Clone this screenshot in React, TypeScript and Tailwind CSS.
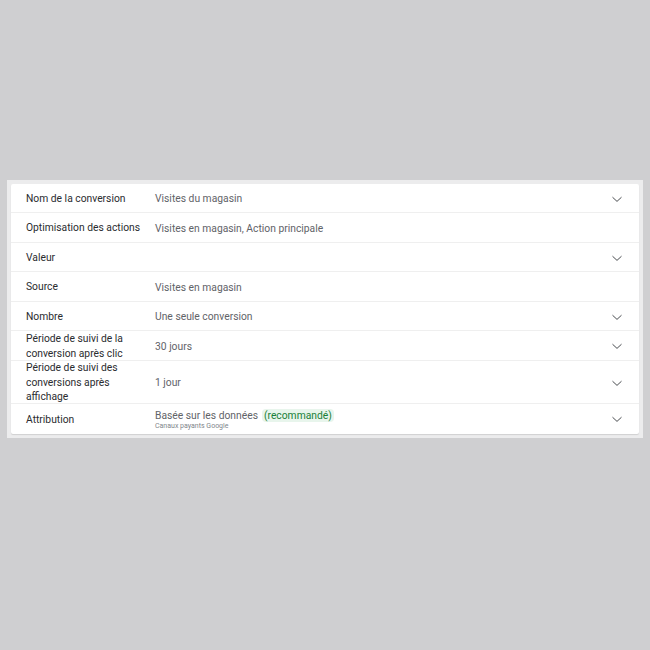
const rows = [
  { label: ["Nom de la conversion"], value: "Visites du magasin", chevron: true, h: "h-[29px]" },
  { label: ["Optimisation des actions"], value: "Visites en magasin, Action principale", chevron: false, h: "h-[30px]" },
  { label: ["Valeur"], value: "", chevron: true, h: "h-[29px]" },
  { label: ["Source"], value: "Visites en magasin", chevron: false, h: "h-[30px]" },
  { label: ["Nombre"], value: "Une seule conversion", chevron: true, h: "h-[29px]" },
  { label: ["Période de suivi de la", "conversion après clic"], value: "30 jours", chevron: true, h: "h-[30px]" },
  { label: ["Période de suivi des", "conversions après", "affichage"], value: "1 jour", chevron: true, h: "h-[43px]" },
];

function Chevron() {
  return (
    <svg width="12" height="7" viewBox="0 0 12 7" fill="none" className="mr-[16px]">
      <path d="M1.5 1.2l4.5 4.2 4.5-4.2" stroke="#4a4d51" strokeWidth="1" />
    </svg>
  );
}

export default function App() {
  return (
    <div
      className="w-[650px] h-[650px] bg-[#cfcfd1] flex items-start justify-center pt-[180px]"
      style={{ fontFamily: "Roboto, 'Liberation Sans', sans-serif" }}
    >
      <div className="w-[636px] bg-[#ececed] px-[4px] py-[4px]">
        <div className="bg-white rounded-[2px] shadow-[0_1px_1px_rgba(0,0,0,0.12)]">
          {rows.map((r, i) => (
            <div
              key={i}
              className={`${r.h} flex items-center border-b border-[#efefef] pl-[15px] pt-[2px]`}
            >
              <div className="w-[129px] text-[10.3px] leading-[14.5px] text-[#2a2c2f]">
                {r.label.map((l) => (
                  <div key={l}>{l}</div>
                ))}
              </div>
              <div className="flex-1 text-[10.3px] text-[#5f6368]">{r.value}</div>
              {r.chevron && <Chevron />}
            </div>
          ))}
          <div className="h-[30px] flex items-center pl-[15px] pt-[1px]">
            <div className="w-[129px] text-[10.3px] pt-[1px] text-[#2a2c2f]">Attribution</div>
            <div className="flex-1 flex flex-col">
              <div className="flex items-center text-[10.3px] leading-[13px] text-[#5f6368]">
                Basée sur les données
                <span className="ml-[4px] px-[2px] rounded-[4px] bg-[#e8f5ec] text-[#188038]">
                  (recommandé)
                </span>
              </div>
              <div className="text-[7px] leading-[9px] text-[#80868b]">Canaux payants Google</div>
            </div>
            <Chevron />
          </div>
        </div>
      </div>
    </div>
  );
}
